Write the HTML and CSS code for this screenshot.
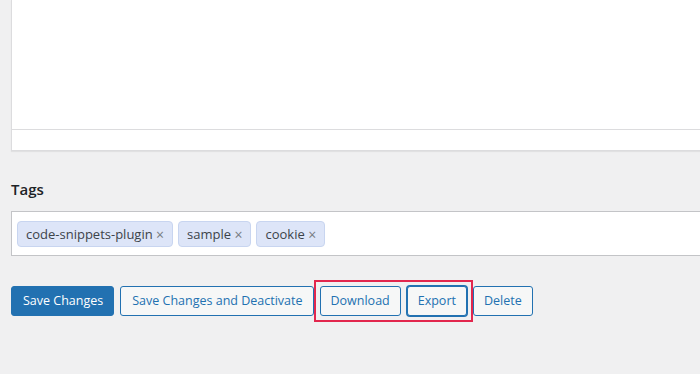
FILE: index.html
```html
<!DOCTYPE html>
<html>
<head>
<meta charset="utf-8">
<link rel="stylesheet" href="styles.css">
</head>
<body>
<div class="page">
  <div class="editor">
    <div class="editor-body"></div>
    <div class="editor-foot"></div>
  </div>
  <h2 class="tags-title">Tags</h2>
  <div class="tag-input">
    <span class="chip">code-snippets-plugin <span class="x">×</span></span>
    <span class="chip">sample <span class="x">×</span></span>
    <span class="chip">cookie <span class="x">×</span></span>
  </div>
  <div class="actions">
    <button class="btn primary wide">Save Changes</button>
    <button class="btn wide">Save Changes and Deactivate</button>
    <div class="highlight">
      <button class="btn">Download</button>
      <button class="btn focus">Export</button>
    </div>
    <button class="btn">Delete</button>
  </div>
</div>
</body>
</html>
```
FILE: styles.css
```css
html {
  overflow: hidden;
  background: #f0f0f1;
}
body {
  margin: 0;
  padding: 0;
  background: #f0f0f1;
  font-family: "Open Sans", "Noto Sans", sans-serif;
  font-size: 13px;
  color: #1d2327;
}
.page {
  padding-left: 11px;
  width: 720px;
  padding-bottom: 40px;
}
.editor {
  background: #fff;
  border: 1px solid #dcdcde;
  border-top: none;
  border-right: none;
  box-shadow: 0 1px 1px rgba(0,0,0,0.06);
}
.editor-body {
  height: 129px;
  border-bottom: 1px solid #dcdcde;
}
.editor-foot {
  height: 20px;
}
.tags-title {
  margin: 0;
  padding-top: 29px;
  height: 31px;
  font-size: 15px;
  font-weight: 600;
  line-height: 18px;
  color: #1d2327;
}
.tag-input {
  background: #fff;
  border: 1px solid #c3c4c7;
  border-right: none;
  height: 26px;
  padding: 9px 5px 8px;
  display: flex;
  gap: 5px;
}
.chip {
  display: inline-flex;
  align-items: center;
  height: 24px;
  padding: 0 8px;
  background: #dde5f8;
  border: 1px solid #c8d5f0;
  border-radius: 4px;
  color: #3c434a;
  font-size: 13px;
  white-space: pre;
}
.chip .x {
  color: #787c82;
  font-size: 14px;
}
.actions {
  display: flex;
  gap: 6px;
  padding-top: 30px;
  align-items: flex-start;
}
.btn {
  font-family: inherit;
  font-size: 12.5px;
  height: 30px;
  padding: 0 10px;
  border: 1px solid #2271b1;
  border-radius: 3px;
  background: #f6f7f7;
  color: #2271b1;
  line-height: 28px;
  cursor: pointer;
}
.btn.wide {
  padding: 0 10px 0 11px;
}
.btn.primary {
  background: #2271b1;
  color: #fff;
}
.btn.focus {
  box-shadow: 0 0 0 1px #2271b1;
}
.highlight {
  position: relative;
  display: flex;
  gap: 6px;
}
.highlight::before {
  content: "";
  position: absolute;
  left: -6px;
  right: -6px;
  top: -6px;
  bottom: -6px;
  border: 2px solid #e2264d;
  pointer-events: none;
}
```
